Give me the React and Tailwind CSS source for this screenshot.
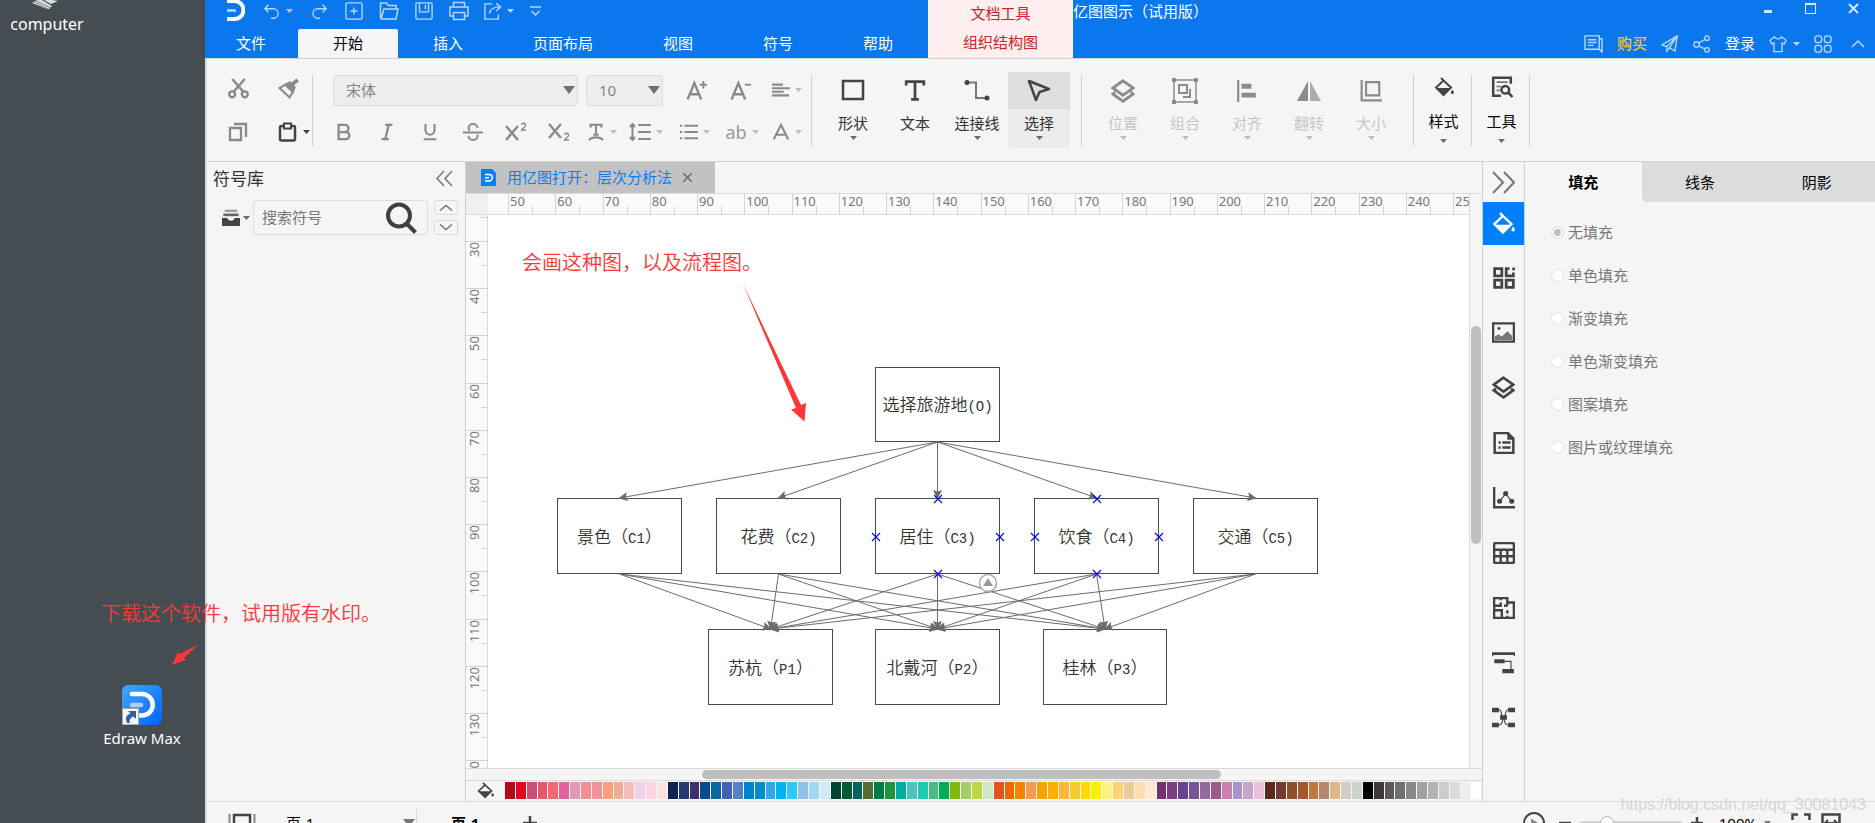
import React, { useState } from "react";

const menuTabs = ["开始", "插入", "页面布局", "视图", "符号", "帮助"];

const fillOptions = ["无填充", "单色填充", "渐变填充", "单色渐变填充", "图案填充", "图片或纹理填充"];

const hMarks = Array.from({ length: 20 }, (_, i) => 50 + i * 10);
const vMarks = Array.from({ length: 11 }, (_, i) => 30 + i * 10);

const palette = [
  "#b50a1a", "#d90b22", "#c94f78", "#e85565", "#ec6c73", "#e8609e", "#e199b8", "#f0908c", "#f19199", "#ff9f7a", "#f1ab98", "#f6bdbd", "#ecd4e8", "#ffd3e3", "#ffe0e4",
  "#10224f", "#253a70", "#412e74", "#084a8e", "#0668a5", "#4062b0", "#5583c5", "#0080d0", "#008dd0", "#2fa8e4", "#00b4f2", "#30c8fa", "#8cc2ec", "#a0d8f0", "#ceebf7",
  "#004236", "#005a32", "#00655f", "#566c30", "#007a46", "#1e963e", "#00ada0", "#52bfc3", "#1acdb2", "#49bb80", "#00ae52", "#7fb90e", "#a2d064", "#bcd842", "#cde8c9",
  "#e6521e", "#ec6800", "#f38500", "#f39a54", "#f2a500", "#ffaf00", "#ffb833", "#f9ca32", "#ffd900", "#fff000", "#fcf285", "#fed470", "#ebcb97", "#ffdcac", "#fde8d0",
  "#76306f", "#803d81", "#674297", "#75559a", "#97689e", "#9c5a87", "#cd7fae", "#aa92ce", "#c7a5c8", "#ecc1da",
  "#5c2a1c", "#733b30", "#924d2a", "#a75627", "#c07842", "#b5866d", "#deb887", "#d6ccc6", "#cad5cc",
  "#000000", "#3e3838", "#5a5858", "#707070", "#888888", "#a0a2a1", "#b3b5b4", "#cbcdcc", "#dbdbdb", "#eeeeee", "#ffffff",
];

// x / y are canvas coordinates, label is [name, code, closing bracket]
const goal = { label: ["选择旅游地", "(O)", ""], x: 387, y: 152, w: 125, h: 75 };
const criteria = [
  { label: ["景色（", "C1", "）"], x: 69, y: 283, w: 125, h: 76 },
  { label: ["花费（", "C2)", ""], x: 228, y: 283, w: 125, h: 76 },
  { label: ["居住（", "C3)", ""], x: 387, y: 283, w: 125, h: 76, active: true },
  { label: ["饮食（", "C4)", ""], x: 546, y: 283, w: 125, h: 76, active: true },
  { label: ["交通（", "C5)", ""], x: 705, y: 283, w: 125, h: 76 },
];
const plans = [
  { label: ["苏杭（", "P1", "）"], x: 220, y: 414, w: 125, h: 76 },
  { label: ["北戴河（", "P2", "）"], x: 387, y: 414, w: 125, h: 76 },
  { label: ["桂林（", "P3", "）"], x: 555, y: 414, w: 124, h: 76 },
];

const edges = [
  ...criteria.map((c) => [goal, c]),
  ...criteria.flatMap((c) => plans.map((p) => [c, p])),
];

function Svg({ w = 20, h, box = "0 0 20 20", sw = 2, className = "", children }) {
  return (
    <svg
      width={w}
      height={h || w}
      viewBox={box}
      fill="none"
      stroke="currentColor"
      strokeWidth={sw}
      className={`shrink-0 ${className}`}
      aria-hidden="true"
    >
      {children}
    </svg>
  );
}

function Caret({ className = "" }) {
  return (
    <Svg w={7} h={4} box="0 0 7 4" className={className}>
      <path d="M0 0h7L3.5 4z" fill="currentColor" stroke="none" />
    </Svg>
  );
}

function Divider() {
  return <div className="h-[71px] w-px shrink-0 bg-[#cfcfcf]" />;
}

function Bucket({ w = 20 }) {
  return (
    <Svg w={w}>
      <path d="M7 1l3 3M9.5 3.5L17 10.5 9.5 18 2 10.5z" />
      <path d="M3 11h13.5L9.5 18z" fill="currentColor" stroke="none" />
      <path d="M18.4 12.5c1.2 1.8 1.5 2.4 1.5 3a1.5 1.5 0 0 1-3 0c0-.6.4-1.2 1.5-3z" fill="currentColor" stroke="none" />
    </Svg>
  );
}

function Layers({ w = 22 }) {
  return (
    <Svg w={w} sw={2.3}>
      <path d="M10 1.5L18.5 7.500 10 13.500 1.500 7.500z" />
      <path d="M3.500 11L1.500 12.500 10 18.500l8.500-6-2-1.500" />
    </Svg>
  );
}

function QuickBar() {
  return (
    <div className="flex h-[22px] items-center pl-[22px] text-[#b5d7fc]">
      <Svg w={18} h={22} box="0 0 18 22" sw={4} className="text-white">
        <path d="M0 1h7.500a8.500 8.500 0 0 1 0 18H0" />
        <path d="M0 10.500h9" stroke="#9fcbfb" strokeWidth="3" />
      </Svg>
      <button aria-label="撤销" className="ml-[18px] flex w-[38px] items-center gap-[5px]">
        <Svg w={18} sw={1.5}>
          <path d="M6 3L2 7.500l4 4M2.500 7.500h9a5 5 0 0 1 0 10.500H9" />
        </Svg>
        <Caret className="text-[#c3c3c3]" />
      </button>
      <button aria-label="重做" className="flex w-[35px] justify-center">
        <Svg w={18} sw={1.5}>
          <path d="M14 3l4 4.500-4 4M17.500 7.500h-9a5 5 0 0 0 0 10.500H11" />
        </Svg>
      </button>
      <button aria-label="新建" className="flex w-[35px] justify-center">
        <Svg w={18} sw={1.5}>
          <rect x="1" y="1" width="18" height="18" rx="1.500" />
          <path d="M10 6v8M6 10h8" />
        </Svg>
      </button>
      <button aria-label="打开" className="flex w-[35px] justify-center">
        <Svg w={20} sw={1.5}>
          <path d="M1.500 17V2h6l2 2.500H17V8M2 18L5 8h14l-2 10z" />
        </Svg>
      </button>
      <button aria-label="保存" className="flex w-[35px] justify-center">
        <Svg w={18} sw={1.5}>
          <rect x="1" y="1" width="18" height="18" rx="1.500" />
          <path d="M5 1v10h10V1M11.500 3v5" />
        </Svg>
      </button>
      <button aria-label="打印" className="flex w-[35px] justify-center">
        <Svg w={20} sw={1.5}>
          <path d="M4.500 6V1.500h11V6M4.500 15H1V6h18v9h-3.500" />
          <rect x="4.500" y="11.500" width="11" height="7" />
        </Svg>
      </button>
      <button aria-label="导出" className="ml-2 flex w-[44px] items-center gap-[5px]">
        <Svg w={18} sw={1.5}>
          <path d="M9 2H1v17h15v-5M6 13c.5-5 4-7 11-7.500M13.500 1.500l5 4-5 4.500" />
        </Svg>
        <Caret />
      </button>
      <button aria-label="自定义快速访问" className="flex w-[14px] justify-center">
        <Svg w={11} h={11} box="0 0 11 11" sw={1.5}>
          <path d="M0 1h11M1.500 5l4 4 4-4" />
        </Svg>
      </button>
    </div>
  );
}

function Header({ tab, setTab }) {
  return (
    <header className="flex h-[58px] shrink-0 bg-[#0a77ec] text-[15px] leading-none text-white">
      <div className="flex flex-col justify-between">
        <QuickBar />
        <nav className="flex h-[29px]">
          <button className="pl-[31px] pr-[32px]">文件</button>
          {menuTabs.map((name) => (
            <button
              key={name}
              onClick={() => setTab(name)}
              className={name === tab ? "rounded-t-[2px] bg-[#f5f5f5] px-[35px] text-black" : "px-[35px]"}
            >
              {name}
            </button>
          ))}
        </nav>
      </div>
      <div className="flex w-[145px] shrink-0 flex-col bg-[#ffeeee] text-[#c8242c]">
        <span className="flex h-[27px] items-center justify-center">文档工具</span>
        <button className="h-[31px]">组织结构图</button>
      </div>
      <div className="flex flex-1 flex-col justify-between">
        <div className="flex justify-between">
          <h1 className="flex h-[22px] items-center">亿图图示（试用版）</h1>
          <div className="flex h-4 text-[#d5e8fd]">
            <button aria-label="最小化" className="flex w-[43px] items-end justify-center pb-[3px]">
              <Svg w={8} h={3} box="0 0 8 3" sw={3}><path d="M0 1.500h8" /></Svg>
            </button>
            <button aria-label="最大化" className="flex w-[43px] items-center justify-center">
              <Svg w={11} h={11} box="0 0 11 11" sw={1}>
                <rect x=".5" y=".5" width="10" height="10" />
                <path d="M0 1.500h11" />
              </Svg>
            </button>
            <button aria-label="关闭" className="flex w-[43px] items-center justify-center">
              <Svg w={11} h={11} box="0 0 11 11"><path d="M1 1l9 9M10 1l-9 9" /></Svg>
            </button>
          </div>
        </div>
        <div className="flex h-[29px] items-center justify-end gap-[14px] pr-[10px] text-[#b5d7fc]">
          <button aria-label="消息">
            <Svg w={19} sw={1.5}>
              <path d="M1 2h15v14H1zM16 5h3v14l-3-3M4 6h9M4 9h9M4 12h6" />
            </Svg>
          </button>
          <a href="#buy" className="font-medium text-[#ffc21a]">购买</a>
          <button aria-label="发送">
            <Svg w={18} sw={1.5}>
              <path d="M18 1L1 11l5.500 2L18 1l-2.500 17-6-4M6.500 13v5l3-4L18 1" />
            </Svg>
          </button>
          <button aria-label="分享">
            <Svg w={18} sw={1.5}>
              <circle cx="4" cy="10.500" r="3" />
              <circle cx="15.500" cy="3.500" r="2.500" />
              <circle cx="15.500" cy="16.500" r="2.500" />
              <path d="M6.500 9L13 5M6.500 12l6.500 3.500" />
            </Svg>
          </button>
          <a href="#login" className="text-white">登录</a>
          <button aria-label="皮肤" className="flex items-center gap-[6px]">
            <Svg w={18} sw={1.5}>
              <path d="M6 2L1 6l2 4 2.500-1v9.500h9V9l2.500 1 2-4-5-4c-1 3-7 3-8 0z" />
            </Svg>
            <Caret />
          </button>
          <button aria-label="应用">
            <Svg w={18} sw={1.5}>
              <rect x="1" y="1" width="7.500" height="7.500" rx="3" />
              <rect x="11.500" y="1" width="7.500" height="7.500" rx="3" />
              <rect x="1" y="11.500" width="7.500" height="7.500" rx="3" />
              <rect x="11.500" y="11.500" width="7.500" height="7.500" rx="3" />
            </Svg>
          </button>
          <button aria-label="收起功能区" className="pl-[5px]">
            <Svg w={14} h={9} box="0 0 14 9" sw={1.5}><path d="M1 8l6-6 6 6" /></Svg>
          </button>
        </div>
      </div>
    </header>
  );
}

function Tool({ label, className = "w-[43px]", caret, children }) {
  return (
    <button aria-label={label} className={`flex h-full items-center justify-center gap-[5px] ${className}`}>
      {children}
      {caret && <Caret className="text-[#bdbdbd]" />}
    </button>
  );
}

function BigTool({ label, active, disabled, noCaret, children }) {
  return (
    <button
      disabled={disabled}
      className={`flex h-[76px] w-[62px] flex-col items-center rounded-[2px] ${active ? "bg-[#ececec]" : ""} ${disabled ? "text-[#c6c6c6]" : "text-[#333]"}`}
    >
      <span
        className={`flex h-[37px] w-full items-center justify-center ${active ? "bg-[#dfdfdf]" : ""} ${disabled ? "text-[#8c8c8c]" : "text-[#444]"}`}
      >
        {children}
      </span>
      <span className="mt-[7px]">{label}</span>
      {!noCaret && <Caret className={disabled ? "mt-[5px] text-[#bdbdbd]" : "mt-[5px] text-[#6b6b6b]"} />}
    </button>
  );
}

function SideTool({ label, children }) {
  return (
    <button className="flex h-[76px] w-[57px] flex-col items-center pl-[2px] text-black">
      <span className="flex h-[30px] items-center text-[#444]">{children}</span>
      <span className="mt-[12px]">{label}</span>
      <Caret className="mt-[10px] text-[#6b6b6b]" />
    </button>
  );
}

function Ribbon() {
  return (
    <div className="flex h-[104px] shrink-0 items-center border-y border-[#d2d2d2] bg-[#f5f5f5] text-[15px] leading-none text-[#8a8a8a]">
      <div className="grid grid-cols-[50px_34px] grid-rows-[44px_44px] items-center pl-[21px]">
        <button aria-label="剪切">
          <Svg w={21} sw={2.3}>
            <circle cx="4" cy="15.500" r="2.800" />
            <circle cx="16" cy="15.500" r="2.800" />
            <path d="M4 1l10.500 12M16 1L5.500 13" />
          </Svg>
        </button>
        <button aria-label="格式刷">
          <Svg w={21}>
            <path d="M7.500 6L1.500 9.500 11 18.500l3.500-6z" />
            <path d="M5.500 6.500l9 8.500 2.500-6.500-1.500-1.500L20 3l-2.500-2.500L13 4l-2-1z" fill="currentColor" stroke="none" />
          </Svg>
        </button>
        <button aria-label="复制">
          <Svg w={20} sw={2.3}>
            <path d="M2 6h11v12H2zM6 2h12v13" />
          </Svg>
        </button>
        <button aria-label="粘贴" className="flex items-center gap-[5px] text-[#444]">
          <Svg w={20} sw={2.5}>
            <rect x="2" y="4" width="15" height="14.500" rx="1.500" />
            <path d="M6 1.500h7v5H6z" fill="#f5f5f5" strokeWidth="2" />
          </Svg>
          <Caret />
        </button>
      </div>
      <Divider />

      <div className="flex flex-col pl-[9px]">
        <div className="flex h-[44px] items-center pl-[11px] pt-1">
          <div className="relative">
            <select
              aria-label="字体"
              className="h-[31px] w-[245px] appearance-none rounded-[3px] border border-[#dcdcdc] bg-[#ededed] pl-3 text-[#858585]"
            >
              <option>宋体</option>
            </select>
            <Svg w={12} h={8} box="0 0 12 8" className="pointer-events-none absolute right-[3px] top-[11px] text-[#6f6f6f]">
              <path d="M0 0h12L6 8z" fill="currentColor" stroke="none" />
            </Svg>
          </div>
          <div className="relative ml-2">
            <select
              aria-label="字号"
              className="h-[31px] w-[77px] appearance-none rounded-[3px] border border-[#dcdcdc] bg-[#ededed] pl-3 text-[#858585]"
            >
              <option>10</option>
            </select>
            <Svg w={12} h={8} box="0 0 12 8" className="pointer-events-none absolute right-[3px] top-[11px] text-[#6f6f6f]">
              <path d="M0 0h12L6 8z" fill="currentColor" stroke="none" />
            </Svg>
          </div>
          <Tool label="增大字号" className="ml-[11px] w-[44px]">
            <Svg w={21} sw={2.3}>
              <path d="M1.500 18.500L8 3l6.500 15.500M4 13.500h8" />
              <path d="M16.500 1v7M13 4.500h7" strokeWidth="1.800" />
            </Svg>
          </Tool>
          <Tool label="减小字号" className="w-[44px]">
            <Svg w={21} sw={2.3}>
              <path d="M1.500 18.500L8 3l6.500 15.500M4 13.500h8" />
              <path d="M14 4.500h6" strokeWidth="1.800" />
            </Svg>
          </Tool>
          <Tool label="对齐方式" className="w-[49px]" caret>
            <Svg w={18} sw={2.3}>
              <path d="M0 4h12M0 8h20M0 12h13M0 16h19" />
            </Svg>
          </Tool>
        </div>
        <div className="flex h-[44px] items-center">
          <Tool label="加粗">
            <Svg w={18} sw={2.5}><path d="M4 2h7a4 4 0 0 1 0 8H4zM4 10h8a4 4 0 0 1 0 8H4z" /></Svg>
          </Tool>
          <Tool label="斜体">
            <Svg w={18} sw={2.5}><path d="M8 2h8M4 18h8M12 2L8 18" /></Svg>
          </Tool>
          <Tool label="下划线">
            <Svg w={18} sw={2.3}><path d="M5 1v7a5 5 0 0 0 10 0V1M3 18h14" /></Svg>
          </Tool>
          <Tool label="删除线">
            <Svg w={20}><path d="M14.500 6a4.500 4 0 0 0-9 0c0 1.500.5 2 1.500 2.500M0 10.500h20M5.500 14a4.500 4 0 0 0 9 0v-1.500" /></Svg>
          </Tool>
          <Tool label="上标">
            <Svg w={22} box="0 0 22 20">
              <path d="M1 4l12 14M13 4L1 18" strokeWidth="2.400" />
              <path d="M16.500 3a2 2 0 0 1 4 .5c0 1.500-3 2.500-4 4.500h4.500" strokeWidth="1.300" />
            </Svg>
          </Tool>
          <Tool label="下标">
            <Svg w={22} box="0 0 22 20">
              <path d="M1 2l12 14M13 2L1 16" strokeWidth="2.400" />
              <path d="M16.500 13a2 2 0 0 1 4 .5c0 1.500-3 2.500-4 4.500h4.500" strokeWidth="1.300" />
            </Svg>
          </Tool>
          <Tool label="文字效果" className="w-[44px]" caret>
            <Svg w={18} sw={2.3}>
              <path d="M4 5V2h12v3M10 2v11M7 13h6M2 19c4-4 12-4 16 0" />
            </Svg>
          </Tool>
          <Tool label="行距" className="w-[44px]" caret>
            <Svg w={22} h={20} box="0 0 22 20">
              <path d="M9 3h13M9 10h13M9 17h13M3.500 2v16M1 5l2.500-3L6 5M1 15l2.500 3L6 15" />
            </Svg>
          </Tool>
          <Tool label="项目符号" className="w-[54px]" caret>
            <Svg w={18} sw={2.3}>
              <path d="M5 3h15M5 10h15M5 17h15M0 3h2.500M0 10h2.500M0 17h2.500" />
            </Svg>
          </Tool>
          <Tool label="大小写" className="w-[40px]" caret>
            <span className="text-lg leading-none text-[#9a9a9a]">ab</span>
          </Tool>
          <Tool label="字体颜色" className="w-[49px]" caret>
            <Svg w={18} sw={2.3}><path d="M2 18L10 2l8 16M5 13h10" /></Svg>
          </Tool>
        </div>
      </div>
      <Divider />

      <div className="flex pl-[10px] pr-[11px]">
        <BigTool label="形状">
          <Svg w={24} box="0 0 24 24" sw={2.5}><rect x="2" y="2" width="20" height="18" /></Svg>
        </BigTool>
        <BigTool label="文本" noCaret>
          <Svg w={22} sw={2.5}><path d="M2 5V1.500h16V5M10 1.500v15.500M6.500 17.500h7" /></Svg>
        </BigTool>
        <BigTool label="连接线">
          <Svg w={26} h={22} box="0 0 26 22">
            <path d="M3 2.500h9V18h11" stroke="#777" />
            <circle cx="3" cy="2.500" r="2.500" fill="currentColor" stroke="none" />
            <circle cx="23" cy="18" r="2.500" fill="currentColor" stroke="none" />
          </Svg>
        </BigTool>
        <BigTool label="选择" active>
          <Svg w={24} box="0 0 24 24" sw={2.500}>
            <path d="M2 2l20 8-9.500 3L9 21z" strokeLinejoin="round" />
          </Svg>
        </BigTool>
      </div>
      <Divider />

      <div className="flex pl-[10px] pr-[11px]">
        <BigTool label="位置" disabled><Layers w={24} /></BigTool>
        <BigTool label="组合" disabled>
          <Svg w={26} box="0 0 26 26">
            <rect x="2" y="2" width="22" height="22" strokeWidth="1.500" />
            <rect x="7" y="7" width="8" height="8" />
            <path d="M18 11v8h-7" />
            <path d="M0 0h4v4H0zM22 0h4v4h-4zM0 22h4v4H0zM22 22h4v4h-4z" fill="#8c8c8c" stroke="none" />
          </Svg>
        </BigTool>
        <BigTool label="对齐" disabled>
          <Svg w={22}>
            <path d="M2 0v20" />
            <path d="M5 3.500h9v4.500H5zM5 11.500h13v4.500H5z" fill="currentColor" stroke="none" />
          </Svg>
        </BigTool>
        <BigTool label="翻转" disabled>
          <Svg w={24} h={20} box="0 0 24 20">
            <path d="M11 0v20H0z" fill="currentColor" stroke="none" />
            <path d="M13 0v20h11z" fill="#ababab" stroke="none" />
          </Svg>
        </BigTool>
        <BigTool label="大小" disabled>
          <Svg w={22}>
            <path d="M1.500 0v18.500H20" />
            <path d="M5.500 2h12v12h-12z" />
          </Svg>
        </BigTool>
      </div>
      <Divider />
      <SideTool label="样式"><Bucket w={20} /></SideTool>
      <Divider />
      <SideTool label="工具">
        <Svg w={22} sw={2.3}>
          <path d="M18 7V1.500H2v16.500h7" />
          <path d="M5 5.500h10M5 9.500h4M5 13h3" stroke="#777" strokeWidth="1.500" />
          <circle cx="13" cy="12.500" r="3.500" />
          <path d="M15.500 15l4 4" />
        </Svg>
      </SideTool>
      <Divider />
    </div>
  );
}

function SymbolLibrary() {
  return (
    <aside className="w-[259px] shrink-0 border-r border-[#cfcfcf] bg-[#f5f5f5]">
      <div className="flex h-8 items-center justify-between pl-[6px] pr-3">
        <h2 className="text-[17px] leading-none text-[#333]">符号库</h2>
        <button aria-label="收起符号库" className="text-[#777]">
          <Svg w={17} box="0 0 17 17" sw={1.5}><path d="M8 1L1 8.500 8 16M16 1L9 8.500l7 7.500" /></Svg>
        </button>
      </div>
      <div className="mt-[6px] flex items-center pl-[15px]">
        <button aria-label="符号库菜单" className="flex w-[31px] items-center gap-[3px] text-[#444]">
          <Svg w={18}>
            <path d="M3 2h14" stroke="#999" strokeWidth="2.500" />
            <path d="M1.500 6.500h17" stroke="#666" strokeWidth="3" />
            <path d="M0 10h6c.5 4 7.500 4 8 0h6v9H0z" fill="currentColor" stroke="none" />
          </Svg>
          <Caret className="text-[#6b6b6b]" />
        </button>
        <div className="flex h-[35px] w-[175px] items-center rounded-[3px] border border-[#dedede] pl-2">
          <input
            aria-label="搜索符号"
            placeholder="搜索符号"
            className="w-[123px] bg-transparent text-[15px] outline-none placeholder:text-[#777]"
          />
          <button aria-label="搜索" className="text-[#404040]">
            <Svg w={32} box="0 0 32 32" sw={4}>
              <circle cx="14" cy="13.500" r="11" />
              <path d="M21.500 21.500l9 9" />
            </Svg>
          </button>
        </div>
        <div className="ml-[6px] flex flex-col gap-[5px] text-[#777]">
          <button aria-label="上一个" className="flex h-[15px] w-6 items-center justify-center rounded-[3px] border border-[#dadada]">
            <Svg w={14} h={7} box="0 0 14 7" sw={1.5}><path d="M1 6.500l6-5 6 5" /></Svg>
          </button>
          <button aria-label="下一个" className="flex h-[15px] w-6 items-center justify-center rounded-[3px] border border-[#dadada]">
            <Svg w={14} h={7} box="0 0 14 7" sw={1.5}><path d="M1 .5l6 5 6-5" /></Svg>
          </button>
        </div>
      </div>
    </aside>
  );
}

function TopRuler() {
  return (
    <div className="flex h-[22px] shrink-0 overflow-hidden border-y border-[#dadada] bg-[#fafafa] text-[13px] leading-[14px] text-[#777]">
      <div className="w-[22px] shrink-0 bg-[#f0f0f0]" />
      <div className="w-5 shrink-0" />
      {hMarks.map((m) => (
        <div key={m} className="flex flex-1 items-end border-l border-[#d4d4d4]">
          <div className="h-full w-1/2 whitespace-nowrap pl-px">{m}</div>
          <div className="h-2 border-l border-[#d4d4d4]" />
        </div>
      ))}
      <div className="w-4 shrink-0 overflow-hidden border-l border-[#d4d4d4] pl-px">250</div>
    </div>
  );
}

function LeftRuler() {
  return (
    <div className="flex w-[22px] shrink-0 flex-col overflow-hidden border-r border-[#dadada] bg-[#fafafa] text-[13px] leading-[14px] text-[#777]">
      <div className="flex h-[26px] shrink-0 justify-end pt-[2px]">
        <div className="w-2 border-t border-[#d4d4d4]" />
      </div>
      {vMarks.map((m) => (
        <div key={m} className="flex min-h-0 flex-1 justify-between border-t border-[#d4d4d4]">
          <span className="rotate-180 self-start pr-px [writing-mode:vertical-rl]">{m}</span>
          <div className="mt-[23px] w-2 shrink-0 border-t border-[#d4d4d4]" />
        </div>
      ))}
      <div className="flex h-[8px] shrink-0 items-start overflow-hidden border-t border-[#d4d4d4]">
        <span className="rotate-180 pr-px [writing-mode:vertical-rl]">140</span>
      </div>
    </div>
  );
}

function Node({ node }) {
  const [name, code, end] = node.label;
  return (
    <div
      className="absolute flex items-center justify-center whitespace-nowrap border border-[#4a4a4a] text-[17px] leading-none text-[#333]"
      style={{ left: node.x, top: node.y, width: node.w, height: node.h }}
    >
      <p className="font-[350]">
        {name}
        <span className="font-['Liberation_Mono',monospace] text-[14px] leading-none">{code}</span>
        {end}
      </p>
    </div>
  );
}

function Canvas() {
  const nodes = [goal, ...criteria, ...plans];
  const marks = criteria
    .filter((c) => c.active)
    .flatMap((c) => [
      [c.x + 63, c.y + 1],
      [c.x + 63, c.y + 76],
      [c.x + 1, c.y + 39],
      [c.x + 125, c.y + 39],
    ]);

  return (
    <div className="relative min-w-0 flex-1 overflow-hidden bg-white font-['Noto_Sans_CJK_SC',sans-serif]">
      {nodes.map((n) => (
        <Node key={n.label[1]} node={n} />
      ))}
      <svg className="absolute inset-0 h-full w-full" aria-hidden="true">
        <defs>
          <marker id="arrow" markerUnits="userSpaceOnUse" markerWidth="9" markerHeight="9" refX="8" refY="4.500" orient="auto">
            <path d="M0 0l9 4.500L0 9l1.500-4.500z" fill="#6b6b6b" />
          </marker>
        </defs>
        {edges.map(([a, b], i) => (
          <line
            key={i}
            x1={a.x + a.w / 2}
            y1={a.y + a.h}
            x2={b.x + b.w / 2}
            y2={b.y}
            stroke="#6b6b6b"
            markerEnd="url(#arrow)"
          />
        ))}
        {marks.map(([x, y], i) => (
          <path key={i} d={`M${x - 4} ${y - 4}l8 8m0-8l-8 8`} stroke="#0a0af0" strokeWidth="1.200" />
        ))}
        <circle cx="500" cy="368" r="8.500" fill="#fff" stroke="#aaa" strokeWidth="1.500" />
        <path d="M500 363l5 8h-10z" fill="#999" />
        <path d="M255 69l58 121 5-2-1.500 18.500L303 194.500l5-1.500z" fill="#fb3737" />
      </svg>
      <p className="absolute left-[34px] top-[35px] text-[20px] font-[350] leading-6 text-[#fb3737]">
        会画这种图，以及流程图。
      </p>
    </div>
  );
}

function Workspace() {
  return (
    <main className="flex min-w-0 flex-1 flex-col bg-[#f5f5f5]">
      <div className="flex h-[31px] shrink-0">
        <div className="flex w-[249px] items-center bg-[#c2c2c2] pl-[15px] text-[15px] leading-none text-[#087ff5]">
          <Svg w={15} h={17} box="0 0 15 17">
            <path d="M0 0h11l4 4v13H0z" fill="#087ff5" stroke="none" />
            <path d="M4 5.500h4a3 3 0 0 1 0 6.500H4M4 8.800h4" stroke="#fff" strokeWidth="1.500" />
          </Svg>
          <span className="ml-[11px]">用亿图打开：层次分析法</span>
          <button aria-label="关闭文档" className="ml-[11px] text-[#666]">
            <Svg w={9} h={9} box="0 0 9 9" sw={1.300}><path d="M0 0l9 9M9 0L0 9" /></Svg>
          </button>
        </div>
      </div>
      <div className="flex min-h-0 flex-1">
        <div className="flex min-w-0 flex-1 flex-col">
          <TopRuler />
          <div className="flex min-h-0 flex-1">
            <LeftRuler />
            <Canvas />
          </div>
        </div>
        <div className="w-[13px] shrink-0 border-l border-t border-[#dadada] px-px pt-[132px]">
          <div className="h-[218px] rounded-full bg-[#bfbfbf]" />
        </div>
      </div>
      <div className="flex h-[13px] shrink-0 items-center border-y border-[#dadada] pl-[236px]">
        <div className="h-[9px] w-[519px] rounded-full bg-[#bfbfbf]" />
      </div>
      <div className="flex h-5 shrink-0 items-start pl-[11px] pr-px pt-px text-[#444]">
        <button aria-label="填充颜色" className="w-[28px]"><Bucket w={17} /></button>
        <div className="flex h-[17px] flex-1 gap-px">
          {palette.map((c) => (
            <button key={c} aria-label={c} className="flex-1" style={{ backgroundColor: c }} />
          ))}
        </div>
      </div>
    </main>
  );
}

const railIcons = [
  {
    label: "主题",
    icon: (
      <Svg w={22} sw={2.5}>
        <path d="M1.500 1.500H8V8H1.500zM1.500 12H8v6.500H1.500zM12 12h6.500v6.500H12zM15 1.500h-3V8h6.500V5" />
        <path d="M17.500 .5h2.500v2.500h-2.500z" fill="currentColor" stroke="none" />
      </Svg>
    ),
  },
  {
    label: "图片",
    icon: (
      <Svg w={23}>
        <path d="M1 2h18v16H1z" />
        <path d="M2.500 16.500v-3l3-2 3 2 5-4.500 4 4v3.500z" fill="#777" stroke="none" />
        <circle cx="6" cy="6.500" r="1.300" fill="currentColor" stroke="none" />
      </Svg>
    ),
  },
  { label: "图层", icon: <Layers w={23} /> },
  {
    label: "备注",
    icon: (
      <Svg w={22} sw={2.3}>
        <path d="M1.500 1h12l5 5v13h-17z" />
        <path d="M13 1v6h6z" fill="currentColor" stroke="none" />
        <path d="M5 9.500h2M8.500 9.500H16M5 14h2M8.500 14H16" />
      </Svg>
    ),
  },
  {
    label: "图表",
    icon: (
      <Svg w={22} sw={2.3}>
        <path d="M1 0v18.500h19" />
        <path d="M6 13l5.500-7L17 13" strokeWidth="1" />
        <circle cx="6" cy="13" r="2.300" fill="currentColor" stroke="none" />
        <circle cx="11.500" cy="6" r="2.300" fill="currentColor" stroke="none" />
        <circle cx="17" cy="13" r="2.300" fill="currentColor" stroke="none" />
      </Svg>
    ),
  },
  {
    label: "表格",
    icon: (
      <Svg w={22} sw={2.2}>
        <rect x="1" y="1" width="18" height="18" rx="1" />
        <path d="M1 7h18M1 13h18M7 7v12M13 7v12" />
      </Svg>
    ),
  },
  {
    label: "平面图",
    icon: (
      <Svg w={22} sw={2.2}>
        <path d="M1 1h12v4h6v14H1zM1 8h6V5M7 1v2M13 5v3M1 12h7v7M13 12v3M13 17v2M10 8h3" />
      </Svg>
    ),
  },
  {
    label: "甘特图",
    icon: (
      <Svg w={23}>
        <path d="M0 5V1h20v4l-1.500-1.500h-17z" fill="currentColor" stroke="none" />
        <path d="M2 9h9M9 17.500h10" strokeWidth="3.500" />
        <path d="M11 9h5.500v7" strokeWidth="1" />
      </Svg>
    ),
  },
  {
    label: "思维导图",
    icon: (
      <Svg w={23}>
        <path d="M0 3.500h6M14 3.500h6M0 16.500h6M14 16.500h6M7 10h6" strokeWidth="4" />
        <path d="M6 3.500c3 0 2 5 3 6.500s0 6.500-3 6.500M14 3.500c-3 0-2 5-3 6.500s0 6.500 3 6.500" strokeWidth="1" />
      </Svg>
    ),
  },
];

function SideRail() {
  return (
    <div className="flex w-[43px] shrink-0 flex-col border-x border-[#cfcfcf] bg-[#f5f5f5] text-[#444]">
      <button aria-label="收起面板" className="flex h-10 shrink-0 items-center justify-center text-[#777]">
        <Svg w={23} box="0 0 23 23" sw={2}><path d="M1 1l10 10.500L1 22M12 1l10 10.500L12 22" /></Svg>
      </button>
      <button aria-label="填充" className="flex h-[43px] shrink-0 items-center justify-center bg-[#007fff] text-white">
        <Bucket w={23} />
      </button>
      <div className="flex flex-col pt-[5px]">
        {railIcons.map((r) => (
          <button key={r.label} aria-label={r.label} className="flex h-[55px] items-center justify-center">
            {r.icon}
          </button>
        ))}
      </div>
    </div>
  );
}

function FillPanel() {
  const [fill, setFill] = useState("无填充");

  return (
    <aside className="w-[350px] shrink-0 bg-[#f5f5f5] text-[15px] leading-none">
      <div className="flex h-10 text-black">
        <button className="flex-1 font-bold">填充</button>
        <div className="flex flex-[2] rounded-bl-[5px] bg-[#dcdcdc]">
          <button className="flex-1">线条</button>
          <button className="flex-1">阴影</button>
        </div>
      </div>
      <div className="flex flex-col pl-[26px] pt-[9px] text-[#777]">
        {fillOptions.map((name) => (
          <label key={name} className="flex h-[43px] items-center gap-1">
            <input
              type="radio"
              name="fill"
              checked={fill === name}
              onChange={() => setFill(name)}
              className="size-[13px] appearance-none rounded-full border border-[#e2e2e2] bg-white checked:bg-[#bdbdbd] checked:shadow-[inset_0_0_0_2px_#fff]"
            />
            {name}
          </label>
        ))}
      </div>
    </aside>
  );
}

function StatusBar() {
  return (
    <footer className="h-[22px] shrink-0 overflow-hidden border-t border-[#dadada] bg-[#f5f5f5] text-[15px] leading-none text-black">
      <div className="flex h-[42px] items-center pl-[21px] pr-[34px]">
        <button aria-label="页面视图" className="text-[#444]">
          <Svg w={28} h={20} box="0 0 28 20">
            <path d="M6 20V2h16v18" strokeWidth="2.500" />
            <path d="M1.500 1v18M26.500 1v18" stroke="#888" />
          </Svg>
        </button>
        <div className="relative ml-[30px]">
          <select aria-label="页" className="h-6 w-[130px] appearance-none bg-transparent">
            <option>页-1</option>
          </select>
          <Svg w={12} h={8} box="0 0 12 8" className="pointer-events-none absolute right-px top-[8px] text-[#777]">
            <path d="M0 0h12L6 8z" fill="currentColor" stroke="none" />
          </Svg>
        </div>
        <div className="h-7 w-px bg-[#dadada]" />
        <button className="ml-[34px] font-bold">页-1</button>
        <button aria-label="新建页" className="ml-[44px] text-[#444]">
          <Svg w={14} box="0 0 14 14" sw={2.500}><path d="M7 0v14M0 7h14" /></Svg>
        </button>
        <div className="ml-auto flex items-center text-[#444]">
          <button aria-label="演示">
            <Svg w={22} box="0 0 22 22">
              <circle cx="11" cy="11" r="10" />
              <path d="M8 6.500l7 4.500-7 4.500z" fill="#888" stroke="none" />
            </Svg>
          </button>
          <button aria-label="缩小" className="ml-[14px]">
            <Svg w={12} box="0 0 12 12" sw={2.500}><path d="M0 6h12" /></Svg>
          </button>
          <input
            type="range"
            aria-label="缩放"
            defaultValue="23"
            className="ml-[9px] h-[14px] w-[102px] appearance-none bg-transparent [&::-webkit-slider-runnable-track]:h-1 [&::-webkit-slider-runnable-track]:rounded [&::-webkit-slider-runnable-track]:bg-[#d4d4d4] [&::-webkit-slider-thumb]:-mt-[5px] [&::-webkit-slider-thumb]:size-[14px] [&::-webkit-slider-thumb]:appearance-none [&::-webkit-slider-thumb]:rounded-full [&::-webkit-slider-thumb]:border [&::-webkit-slider-thumb]:border-[#b5b5b5] [&::-webkit-slider-thumb]:bg-white"
          />
          <button aria-label="放大" className="ml-[9px]">
            <Svg w={12} box="0 0 12 12" sw={2.500}><path d="M0 6h12M6 0v12" /></Svg>
          </button>
          <button className="ml-4 flex items-center gap-[7px] text-black">
            100%
            <Caret className="text-[#777]" />
          </button>
          <button aria-label="全屏" className="ml-5">
            <Svg w={20} sw={2.500}><path d="M1.500 7V1.500H7M13 1.500h5.500V7M1.500 13v5.500H7M13 18.500h5.500V13" /></Svg>
          </button>
          <button aria-label="适应页面" className="ml-[10px]">
            <Svg w={20} sw={2.500}>
              <path d="M1.500 1.500h17v17h-17z" />
              <path d="M4 10h12M7 7l-3 3 3 3M13 7l3 3-3 3" strokeWidth="2" />
            </Svg>
          </button>
        </div>
      </div>
    </footer>
  );
}

function Desktop() {
  return (
    <div className="flex w-[205px] shrink-0 flex-col justify-between bg-[#454d52] font-['Noto_Sans',sans-serif] text-[15px] leading-5 text-white">
      <div className="flex w-[86px] flex-col items-center pl-2">
        <Svg w={30} h={9} box="0 0 30 9" className="text-[#d8dde0]">
          <path d="M0 3l5-3h5l10 6-3 3h-2zM12 0h8l6 1-7 3z" fill="currentColor" stroke="none" />
          <path d="M4 1l15 7M2 2l14 7" stroke="#454d52" strokeWidth=".6" />
        </Svg>
        <span className="mt-[5px] text-base leading-5">computer</span>
      </div>
      <div className="mb-[75px] ml-[92px] flex w-[100px] flex-col items-center">
        <Svg w={40} box="0 0 40 40">
          <defs>
            <linearGradient id="tile" x1="0" y1="0" x2="1" y2="1">
              <stop offset="0" stopColor="#44a6fd" />
              <stop offset="1" stopColor="#0063fb" />
            </linearGradient>
          </defs>
          <rect width="40" height="40" rx="6" fill="url(#tile)" stroke="none" />
          <path d="M10 9h10a10.500 10.500 0 0 1 0 21.500h-4" stroke="#fff" strokeWidth="4.500" strokeLinecap="round" />
          <path d="M10 20h9" stroke="#a9d2ff" strokeWidth="4.500" strokeLinecap="round" />
          <path d="M.5 23.500h16v16H.5z" fill="#f6f6f6" stroke="#aaa" strokeWidth="1" />
          <path d="M5 38c-2-5-1-8 3.500-9.500L6 26h8v8l-2.500-2.500C8 33 7 35 8 38z" fill="#2f62a0" stroke="none" />
        </Svg>
        <span className="mt-[3px]">Edraw Max</span>
      </div>
    </div>
  );
}

function App() {
  const [tab, setTab] = useState("开始");

  return (
    <div className="relative flex h-screen overflow-hidden font-['Noto_Sans','Noto_Sans_CJK_SC',sans-serif]">
      <Desktop />
      <div className="flex min-w-0 flex-1 flex-col">
        <Header tab={tab} setTab={setTab} />
        <div className="flex min-h-0 flex-1 flex-col border-l-2 border-[#dcdcdc]">
          <Ribbon />
          <div className="flex min-h-0 flex-1">
            <SymbolLibrary />
            <Workspace />
            <SideRail />
            <FillPanel />
          </div>
          <StatusBar />
        </div>
      </div>

      <div className="absolute bottom-[157px] left-[101px] text-[#fb3737]">
        <p className="whitespace-nowrap font-['Noto_Sans_CJK_SC',sans-serif] text-[20px] font-[350] leading-6">
          下载这个软件，试用版有水印。
        </p>
        <Svg w={28} h={22} box="0 0 28 22" className="ml-[71px] mt-[19px]">
          <path d="M27 0L12 14l2 2-14 5L6 8l2 2z" fill="currentColor" stroke="none" />
        </Svg>
      </div>
      <p className="absolute bottom-2 right-[9px] font-['Liberation_Sans',sans-serif] text-base leading-5 text-[#d6d6d6]">
        https://blog.csdn.net/qq_30081043
      </p>
    </div>
  );
}

export default App;
